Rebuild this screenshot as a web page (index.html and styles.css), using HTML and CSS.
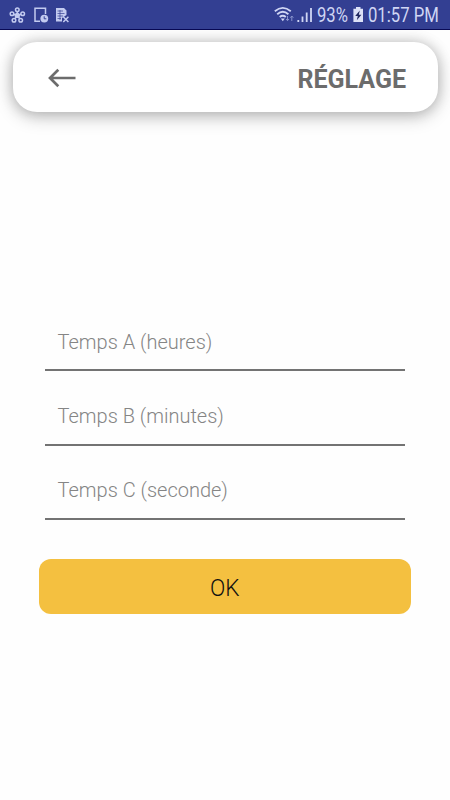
FILE: index.html
```html
<!DOCTYPE html>
<html lang="fr">
<head>
<meta charset="utf-8">
<title>Réglage</title>
<link rel="stylesheet" href="styles.css">
</head>
<body>
<header class="status">
  <svg class="status-left" width="80" height="29" viewBox="0 0 80 29" fill="none" stroke="#c3cbf0" stroke-width="1.5">
    <path d="M17.3 15.5V10M17.3 15.5L12 13.8M17.3 15.5L22.7 13.8M17.3 15.5L14 20M17.3 15.5L20.7 20"/>
    <g fill="#333f92"><circle cx="17.3" cy="9.7" r="1.8"/><circle cx="12" cy="13.7" r="1.8"/><circle cx="22.7" cy="13.7" r="1.8"/><circle cx="14" cy="20.2" r="1.8"/><circle cx="20.7" cy="20.2" r="1.8"/></g>
    <circle cx="17.3" cy="15.4" r="1.9" fill="#c3cbf0"/>
    <path d="M40 21.3H35V8.2H45.5V14"/>
    <circle cx="44.3" cy="18.6" r="3.9" fill="#c3cbf0" stroke="none"/>
    <path d="M44.2 16.3V18.8H46.3" stroke="#333f92" stroke-width="1"/>
    <path d="M56 8H64L66.5 10.5V15L62 18V21.5H56Z" fill="#c3cbf0" stroke="none"/>
    <path d="M57.5 11H63M57.5 13.5H64.5M57.5 16H63M57.5 18.5H61M60 10V20" stroke="#333f92" stroke-width=".7"/>
    <path d="M63.3 16.8L68.4 22M68.4 16.8L63.3 22"/>
  </svg>
  <div class="status-right">
    <svg width="41" height="29" viewBox="273 0 41 29" fill="none" stroke="#d0d6f4">
      <path d="M274.8 11.2Q282.8 4.6 290.8 11.2M277.2 14.2Q282.8 9.4 288.4 14.2M279.7 17Q282.8 14.5 285.8 17" stroke-width="1.8"/>
      <path d="M280.8 18.5H284.8L282.8 21.3Z" fill="#d0d6f4" stroke="none"/>
      <path d="M287.5 16V20.5M286 19L287.5 20.7L289 19M291.8 21V16M290.3 17.7L291.8 16L293.3 17.7" stroke="#8994ce" stroke-width="1"/>
      <path d="M298.3 22V20M302.5 22V16.5M306.7 22V12.5M311 22V8" stroke-width="1.8"/>
    </svg>
    <span class="battery-label">93%</span>
    <svg class="battery" width="11" height="29" viewBox="353 0 11 29">
      <path d="M356 7H360.5V8.7H363V22H353.4V8.7H356Z" fill="#dce1f7"/>
      <path d="M359.8 10.5L355.2 16H357.8L356.8 20.3L361.4 14.7H358.8Z" fill="#20275e"/>
    </svg>
    <span class="clock">01:57 PM</span>
  </div>
</header>
<nav class="toolbar">
  <svg class="back" width="30" height="22" viewBox="0 0 30 22" fill="none" stroke="#6c6c6c" stroke-width="2.7"><path d="M28.5 11H3M11.3 2.7L3 11L11.3 19.3"/></svg>
  <h1>RÉGLAGE</h1>
</nav>
<main>
  <div class="field">Temps A (heures)</div>
  <div class="field">Temps B (minutes)</div>
  <div class="field">Temps C (seconde)</div>
  <button class="ok" type="button"><span>OK</span></button>
</main>
</body>
</html>
```

FILE: styles.css
```css
* { box-sizing: border-box; }
body {
  margin: 0;
  height: 800px;
  overflow: hidden;
  background: #fefefe;
  font-family: Roboto, "Liberation Sans", sans-serif;
}
.status {
  display: flex;
  justify-content: space-between;
  height: 30px;
  background: #333f92;
  border-bottom: 1px solid #090a55;
  color: #d0d6f4;
}
.status-right {
  display: flex;
  width: 177px;
  font-size: 19.5px;
  line-height: 32px;
  white-space: nowrap;
}
.status-right > * { flex-shrink: 0; }
.battery-label, .clock {
  transform: scaleX(.855);
  transform-origin: left;
}
.battery-label {
  width: 35px;
  margin-left: 3px;
}
.battery { margin-left: 1px; }
.clock { margin-left: 4px; }
.toolbar {
  display: flex;
  align-items: center;
  justify-content: space-between;
  height: 70px;
  margin: 12px 12.5px 0;
  padding: 0 31.5px 0 34.5px;
  border-radius: 24px;
  background: #fff;
  box-shadow: 0 5px 18px rgba(0, 0, 0, .22), 0 0 14px rgba(0, 0, 0, .18);
}
.back { margin-top: 2px; }
.toolbar h1 {
  margin: 5px 0 0;
  color: #6c6c6c;
  font-size: 25px;
  font-weight: 700;
  line-height: 30px;
}
main {
  display: flex;
  flex-direction: column;
  margin: 185px 39px 0;
}
.field {
  height: 74.4px;
  margin: 0 6px;
  padding: 29.5px 12.5px 0;
  border-bottom: 2px solid #737373;
  color: #858585;
  font-size: 20px;
  font-weight: 300;
  line-height: 30px;
}
.ok {
  height: 55px;
  margin-top: 38.5px;
  padding: 3px 0 0;
  border: 0;
  border-radius: 12px;
  background: #f4c040;
  color: #111;
  font: 300 24px/30px Roboto, "Liberation Sans", sans-serif;
}
.ok span {
  display: inline-block;
  transform: scaleX(.94);
}
```
